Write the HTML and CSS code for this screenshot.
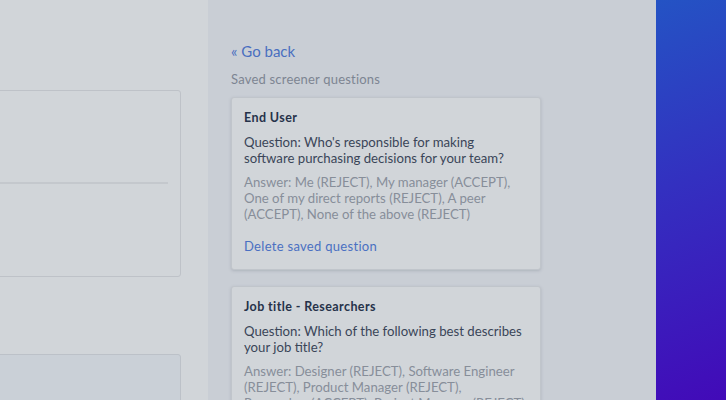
FILE: index.html
```html
<!DOCTYPE html>
<html>
<head>
<meta charset="utf-8">
<link rel="stylesheet" href="styles.css">
</head>
<body>
<div class="layout">
  <section class="left">
    <div class="lcard">
      <div class="lcard-top"></div>
      <div class="lcard-divider"></div>
      <div class="lcard-bottom"></div>
    </div>
    <div class="lcard2"></div>
  </section>
  <section class="middle">
    <a class="back">« Go back</a>
    <div class="saved-label">Saved screener questions</div>
    <div class="qcard">
      <div class="qtitle">End User</div>
      <div class="qtext">Question: Who's responsible for making software purchasing decisions for your team?</div>
      <div class="qanswer">Answer: Me (REJECT), My manager (ACCEPT), One of my direct reports (REJECT), A peer (ACCEPT), None of the above (REJECT)</div>
      <a class="qdelete">Delete saved question</a>
    </div>
    <div class="qcard">
      <div class="qtitle">Job title - Researchers</div>
      <div class="qtext">Question: Which of the following best describes your job title?</div>
      <div class="qanswer">Answer: Designer (REJECT), Software Engineer (REJECT), Product Manager (REJECT), Researcher (ACCEPT), Project Manager (REJECT)</div>
      <a class="qdelete">Delete saved question</a>
    </div>
  </section>
  <section class="right"></section>
</div>
</body>
</html>
```

FILE: styles.css
```css
html, body {
  margin: 0;
  padding: 0;
  height: 100%;
  overflow: hidden;
}
body {
  font-family: Lato, "Open Sans", sans-serif;
  background: #d1d5d9;
}
.layout {
  display: flex;
  height: 400px;
}
.left {
  width: 208px;
  flex-shrink: 0;
  background: #d1d5d9;
  padding-top: 90px;
  box-sizing: border-box;
  overflow: hidden;
}
.lcard {
  margin-left: -20px;
  width: 201px;
  height: 187px;
  box-sizing: border-box;
  border: 1px solid #bec2c8;
  border-radius: 3px;
  background: #d1d5d9;
  display: flex;
  flex-direction: column;
}
.lcard-top {
  height: 91px;
}
.lcard-divider {
  height: 2px;
  background: #c4c8cd;
  margin-right: 12px;
}
.lcard-bottom {
  flex: 1;
}
.lcard2 {
  margin-top: 77px;
  margin-left: -20px;
  width: 201px;
  height: 80px;
  box-sizing: border-box;
  border: 1px solid #bcc1c8;
  border-radius: 3px;
  background: #cad0d7;
}
.middle {
  width: 448px;
  flex-shrink: 0;
  background: #c9ced5;
  padding: 40px 0 0 23px;
  box-sizing: border-box;
  display: flex;
  flex-direction: column;
  align-items: flex-start;
  overflow: hidden;
}
.back {
  font-size: 15px;
  line-height: 22px;
  color: #4a6fc0;
}
.saved-label {
  margin-top: 9px;
  font-size: 13px;
  letter-spacing: 0.2px;
  line-height: 16px;
  color: #7d8592;
}
.qcard {
  margin-top: 10px;
  width: 310px;
  flex-shrink: 0;
  box-sizing: border-box;
  background: #d1d5d9;
  border: 1px solid #c0c5cb;
  border-radius: 3px;
  box-shadow: 0 1px 3px rgba(90, 100, 115, 0.25);
  padding: 12px 15px 15px 12px;
}
.qcard + .qcard {
  margin-top: 16px;
}
.qtitle {
  font-size: 12.5px;
  letter-spacing: 0.4px;
  font-weight: 700;
  line-height: 16px;
  color: #26324a;
}
.qtext {
  margin-top: 8px;
  font-size: 13.2px;
  line-height: 16px;
  color: #3a4558;
}
.qanswer {
  margin-top: 8px;
  font-size: 13.2px;
  line-height: 16px;
  color: #878e99;
}
.qdelete {
  display: block;
  margin-top: 16px;
  font-size: 13px;
  letter-spacing: 0.3px;
  line-height: 16px;
  color: #4a70c2;
}
.right {
  flex: 1;
  background: linear-gradient(160deg, #2453c4 0%, #3330c0 45%, #420ab8 100%);
}
```
